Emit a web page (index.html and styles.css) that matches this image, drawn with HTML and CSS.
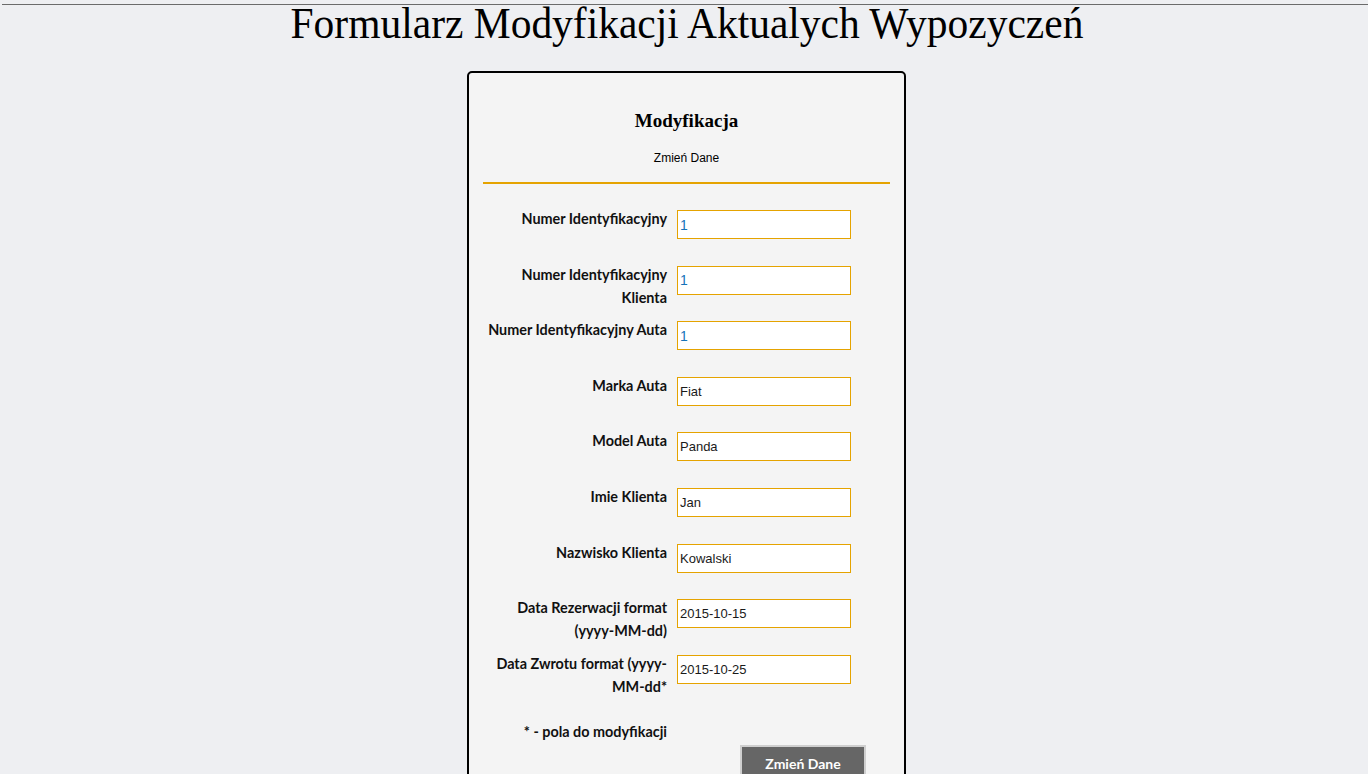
FILE: index.html
```html
<!DOCTYPE html>
<html lang="pl">
<head>
<meta charset="utf-8">
<title>Formularz Modyfikacji Aktualych Wypozyczeń</title>
<link rel="stylesheet" href="styles.css">
</head>
<body>
<div class="topline"></div>
<h1 class="page-title"><span>Formularz Modyfikacji Aktualych Wypozyczeń</span></h1>
<div class="card">
  <h2 class="card-title">Modyfikacja</h2>
  <p class="card-sub">Zmień Dane</p>
  <div class="rule"></div>
  <form class="form">
    <div class="row">
      <label class="lbl">Numer Identyfikacyjny</label>
      <input class="field field-id" type="text" value="1" readonly>
    </div>
    <div class="row">
      <label class="lbl">Numer Identyfikacyjny<br>Klienta</label>
      <input class="field field-id" type="text" value="1" readonly>
    </div>
    <div class="row">
      <label class="lbl">Numer Identyfikacyjny Auta</label>
      <input class="field field-id" type="text" value="1" readonly>
    </div>
    <div class="row">
      <label class="lbl">Marka Auta</label>
      <input class="field" type="text" value="Fiat">
    </div>
    <div class="row">
      <label class="lbl">Model Auta</label>
      <input class="field" type="text" value="Panda">
    </div>
    <div class="row">
      <label class="lbl">Imie Klienta</label>
      <input class="field" type="text" value="Jan">
    </div>
    <div class="row">
      <label class="lbl">Nazwisko Klienta</label>
      <input class="field" type="text" value="Kowalski">
    </div>
    <div class="row">
      <label class="lbl">Data Rezerwacji format<br>(yyyy-MM-dd)</label>
      <input class="field" type="text" value="2015-10-15">
    </div>
    <div class="row">
      <label class="lbl">Data Zwrotu format (yyyy-<br>MM-dd*</label>
      <input class="field" type="text" value="2015-10-25">
    </div>
    <div class="note-row">
      <span class="lbl">* - pola do modyfikacji</span>
    </div>
    <div class="btn-row">
      <button class="btn" type="button">Zmień Dane</button>
    </div>
  </form>
</div>
</body>
</html>
```
FILE: styles.css
```css
html, body {
  margin: 0;
  padding: 0;
}
body {
  background: #eeeff2;
  color: #000;
  font-family: "Liberation Sans", Arial, sans-serif;
  overflow: hidden;
  height: 774px;
}
.topline {
  height: 0;
  margin: 4px 0 0 2px;
  border-top: 1px solid #6b6b6b;
}
.page-title {
  margin: 0;
  text-align: center;
  font-family: "Liberation Serif", "Times New Roman", serif;
  font-weight: normal;
  font-size: 45px;
  line-height: 37px;
  padding-left: 5px;
}
.page-title span {
  display: inline-block;
  transform: scaleX(0.922);
}
.card {
  margin: 29px 0 0 467px;
  border: 2px solid #000;
  border-radius: 5px;
  background: #f4f4f4;
  padding: 0 14px;
  box-sizing: content-box;
  width: 407px;
  height: 720px;
}
.card-title {
  margin: 36px 0 0;
  text-align: center;
  font-family: "Liberation Serif", "Times New Roman", serif;
  font-weight: bold;
  font-size: 19px;
  line-height: 24px;
}
.card-sub {
  margin: 17px 0 0;
  text-align: center;
  font-size: 12px;
  line-height: 16px;
}
.rule {
  margin-top: 16px;
  height: 2px;
  background: #e5a300;
}
.form {
  margin: 23px 0 0 4px;
}
.row {
  display: flex;
  align-items: flex-start;
  gap: 10px;
  height: 55.6px;
}
.lbl {
  width: 180px;
  flex: none;
  white-space: nowrap;
  text-align: right;
  font-family: Lato, "Liberation Sans", sans-serif;
  font-weight: bold;
  font-size: 14.4px;
  line-height: 23px;
  color: #111;
}
.field {
  margin: 3px 0 0;
  width: 174px;
  height: 29px;
  box-sizing: border-box;
  border: 1px solid #e5a300;
  background: #fff;
  padding: 0 2px;
  font-family: "Liberation Sans", Arial, sans-serif;
  font-size: 13px;
  color: #1a1a1a;
  outline: none;
}
.field-id {
  font-size: 14px;
  color: #1673b8;
}
.note-row {
  display: flex;
  margin-top: 13px;
}
.btn-row {
  display: flex;
  margin-top: 2px;
  padding-left: 253px;
}
.btn {
  width: 126px;
  height: 34px;
  background: #666;
  color: #fff;
  border: 2px solid #cfcfcf;
  border-bottom: none;
  font-family: Lato, "Liberation Sans", sans-serif;
  font-weight: bold;
  font-size: 14px;
  padding: 0;
}
```
